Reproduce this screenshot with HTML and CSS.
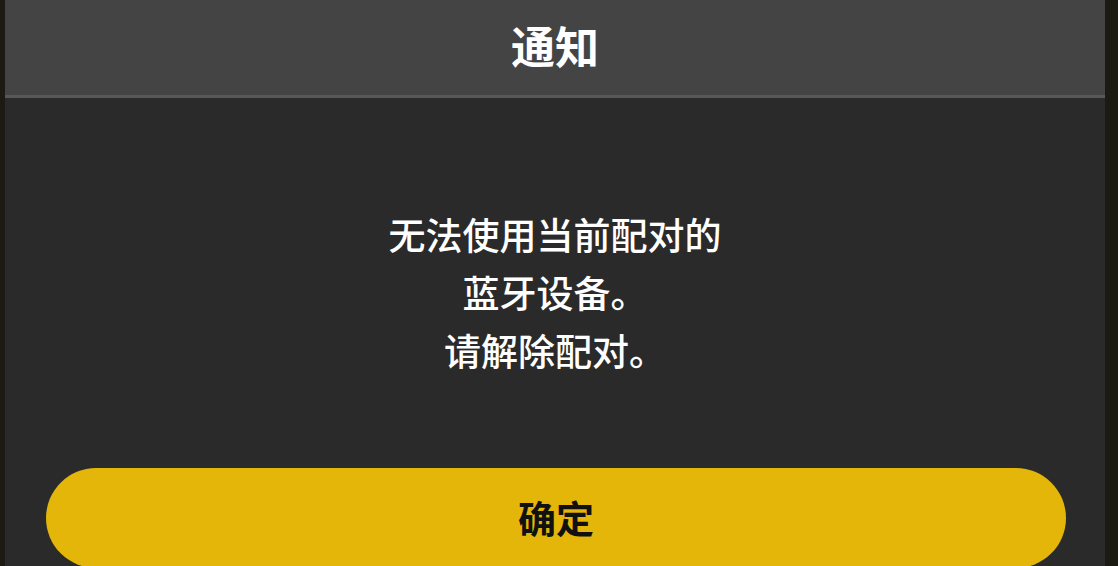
FILE: index.html
```html
<!DOCTYPE html>
<html lang="zh-CN">
<head>
<meta charset="utf-8">
<title>通知</title>
<link rel="stylesheet" href="styles.css">
</head>
<body>
<div class="dialog">
  <div class="header"><h1 class="title">通知</h1></div>
  <div class="content">
    <p class="message">无法使用当前配对的<br>蓝牙设备。<br>请解除配对。</p>
    <button class="ok" type="button">确定</button>
  </div>
</div>
</body>
</html>
```
FILE: styles.css
```css
html, body {
  margin: 0;
  padding: 0;
  height: 100%;
  overflow: hidden;
}
body {
  background: #1b1b13;
  font-family: "Noto Sans CJK SC", "Noto Sans", sans-serif;
}
.dialog {
  margin: 0 13px 0 5px;
  height: 566px;
  background: #2a2a2a;
  display: flex;
  flex-direction: column;
}
.header {
  flex-shrink: 0;
  height: 95px;
  background: #444444;
  border-bottom: 3px solid #585858;
  display: flex;
  align-items: center;
  justify-content: center;
}
.title {
  margin: 0;
  color: #ffffff;
  font-size: 44px;
  font-weight: 700;
  line-height: 1;
  padding-bottom: 5px;
}
.content {
  flex-shrink: 0;
  display: flex;
  flex-direction: column;
  align-items: stretch;
  padding-top: 107px;
}
.message {
  margin: 0;
  text-align: center;
  color: #ffffff;
  font-size: 37px;
  font-weight: 500;
  line-height: 58px;
}
.ok {
  flex-shrink: 0;
  margin: 89px 39px 0 41px;
  height: 100px;
  border: none;
  border-radius: 50px;
  background: #e3b609;
  color: #111111;
  font-family: inherit;
  font-size: 38px;
  font-weight: 700;
  padding: 0 0 4px 0;
}
```
